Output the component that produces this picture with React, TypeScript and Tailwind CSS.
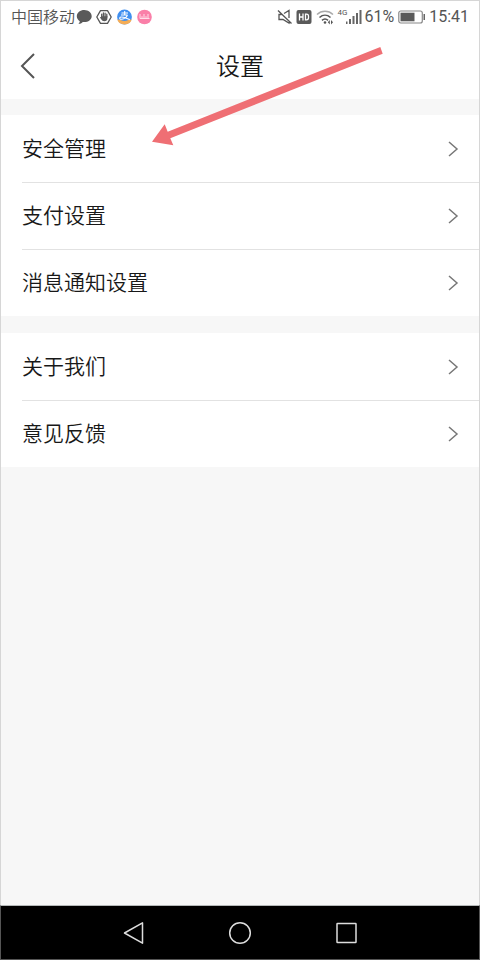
import React from "react";

const groups: string[][] = [
  ["安全管理", "支付设置", "消息通知设置"],
  ["关于我们", "意见反馈"],
];

function StatusBar() {
  return (
    <div className="flex h-8 items-center justify-between pl-[10px] pr-[10px] text-base text-[#555]">
      <div className="flex items-center">
        <span className="w-[65px] whitespace-nowrap pt-px font-[350]">中国移动</span>
        <svg className="mr-1 h-4 w-4" viewBox="0 0 16 16" fill="#5a5a5a" aria-hidden="true">
          <path d="M8.300 1C4.200 1 .8 3.600.8 7.200c0 2.100 1.200 3.900 3 5-.1 1.200-.7 2-1.500 2.800 2 0 3.500-.9 4.500-2 .4.100.9.100 1.300.100 4.300 0 7.600-2.600 7.600-5.900S12.400 1 8.300 1z" />
        </svg>
        <svg className="mr-1 h-4 w-4" viewBox="0 0 16 16" aria-hidden="true">
          <path d="M4.500 1.700h7L15.200 8l-3.700 6.300h-7L.8 8z" fill="none" stroke="#555" strokeWidth="1.300" strokeLinejoin="round" />
          <path d="M5.700 8V5.200M7.400 8V4M9.100 8V4.200M10.800 8V5.200" stroke="#5a5a5a" strokeWidth="1.300" strokeLinecap="round" />
          <path d="M3.800 8.300l1.300-.3.600-.8h5.700v2.300c0 1.700-1.200 2.800-3 2.800-1.600 0-2.500-.8-3.200-2z" fill="#5a5a5a" />
        </svg>
        <svg className="mr-1 h-4 w-4" viewBox="0 0 16 16" aria-hidden="true">
          <circle cx="8.500" cy="8" r="7.400" fill="#3f8ff0" />
          <path d="M1.200 10.500c2.500-.4 4.800 1.500 7.300 1.500s4.800-1.900 7.300-1.500a7.600 7.600 0 0 1-7.300 4.900 7.600 7.600 0 0 1-7.300-4.900z" fill="#f6ad55" />
          <path d="M5.500 4h6.500M8.700 2v4M11.500 6C10.500 9 7 10.600 4.500 10.200c-1.300-.3-1-2.200.8-2.200 3 0 5 1.600 8.500 2.600M5 6h6.500" stroke="#fff" strokeWidth="1.100" fill="none" />
        </svg>
        <svg className="h-4 w-4" viewBox="0 0 16 16" aria-hidden="true">
          <circle cx="8.500" cy="8" r="7.300" fill="#fa7fa8" />
          <path d="M4 5v4.500h2V7.200M8 5v4.500h2V7.200M12 5v4.500h1.500M6 9.500h2M10 9.500h2" stroke="#ffdce8" strokeWidth="1" fill="none" />
        </svg>
      </div>
      <div className="flex items-center">
        <svg className="mr-[3px] h-4 w-4" viewBox="0 0 16 16" fill="none" stroke="#555" strokeWidth="1.300" aria-hidden="true">
          <path d="M1 1.500l13.500 13M7 4.500L12 1.500V9M12 11.500v2.500L6 10.500H2v-5h2.500" />
        </svg>
        <svg className="mr-1 h-4 w-4" viewBox="0 0 16 16" aria-hidden="true">
          <rect x=".5" y="1" width="15" height="14" rx="2" fill="#5a5a5a" />
          <path d="M3.500 4.500v7M7 4.500v7M3.500 8H7M9.500 5.200v5.600h1c1.300 0 2-.8 2-2.100V7.300c0-1.300-.7-2.100-2-2.100z" fill="none" stroke="#fff" strokeWidth="1.300" />
        </svg>
        <svg className="mr-[3px] h-4 w-[18px]" viewBox="0 0 18 16" fill="none" aria-hidden="true">
          <path d="M1 5.500C5.500 1.300 12.500 1.300 17 5.500" stroke="#aaa" strokeWidth="1.500" />
          <path d="M3.500 8.500c3.300-3 7.700-3 11 0M6 11.300c1.800-1.600 4.200-1.600 6 0" stroke="#555" strokeWidth="1.600" />
          <circle cx="9" cy="13.500" r="1.300" fill="#555" />
          <path d="M13.800 11l-2 2.300 2 2.300zM15 11l2 2.300-2 2.300z" fill="#555" />
        </svg>
        <span className="w-[9px] self-start pt-[2px] text-[8px] leading-[12px]">4G</span>
        <svg className="mr-[2px] h-4 w-4" viewBox="0 0 16 16" fill="#666" aria-hidden="true">
          <path d="M0 12.500h1.500V15H0zM3 10h2v5H3zM6.500 7h2v8h-2zM10 4h2v11h-2zM13.500 1h2v14h-2z" />
        </svg>
        <span className="mr-1">61%</span>
        <svg className="mr-[3px] h-4 w-7" viewBox="0 0 28 16" aria-hidden="true">
          <rect x=".8" y="2" width="23.500" height="12" rx="2" fill="none" stroke="#888" strokeWidth="1.200" />
          <path d="M2.500 3.700h14v8.600h-14z" fill="#5a5a5a" />
          <path d="M25.500 5h1.500v6h-1.500z" fill="#666" />
        </svg>
        <span>15:41</span>
      </div>
    </div>
  );
}

function Chevron() {
  return (
    <svg className="h-4 w-3" viewBox="0 0 12 16" fill="none" stroke="#777" strokeWidth="1.500" aria-hidden="true">
      <path d="M2 1l8 7-8 7" />
    </svg>
  );
}

export default function App() {
  return (
    <div className="relative flex min-h-screen flex-col bg-[#f7f7f7] font-[Roboto,'Noto_Sans_CJK_SC',sans-serif] text-[#181818]">
      <header className="border border-b-0 border-[#d6d6d6] bg-white">
        <StatusBar />
        <div className="grid h-[66px] grid-cols-[1fr_auto_1fr] items-center px-[19px]">
          <button type="button" aria-label="返回" className="w-4">
            <svg className="h-[26px] w-4" viewBox="0 0 16 26" fill="none" stroke="#555" strokeWidth="2" aria-hidden="true">
              <path d="M14 1L2 13l12 12" />
            </svg>
          </button>
          <h1 className="pt-[2px] text-2xl font-[350]">设置</h1>
        </div>
      </header>

      <main className="flex grow flex-col gap-[17px] border-x border-[#d6d6d6] pt-4">
        {groups.map((items) => (
          <ul key={items[0]} className="bg-white pl-[21px]">
            {items.map((label) => (
              <li key={label} className="flex h-[67px] border-t border-[#e2e2e2] first:border-t-0">
                <button type="button" className="flex w-full items-center justify-between pr-5 text-left text-[21px] font-[350]">
                  <span className="pt-[2px]">{label}</span>
                  <Chevron />
                </button>
              </li>
            ))}
          </ul>
        ))}
      </main>

      <nav className="flex h-[55px] items-center justify-center gap-20 border border-[#555] border-t-[#b5b9b9] bg-black" aria-label="系统导航">
        <button type="button" aria-label="后退">
          <svg className="h-[26px] w-[26px]" viewBox="0 0 26 26" fill="none" stroke="#ddd" strokeWidth="1.500" strokeLinejoin="round" aria-hidden="true">
            <path d="M3.500 13L21.500 2.800v20.400z" />
          </svg>
        </button>
        <button type="button" aria-label="主屏幕">
          <svg className="h-[26px] w-[26px]" viewBox="0 0 26 26" fill="none" stroke="#ddd" strokeWidth="1.500" aria-hidden="true">
            <circle cx="13" cy="13" r="10.300" />
          </svg>
        </button>
        <button type="button" aria-label="最近任务">
          <svg className="h-[26px] w-[26px]" viewBox="0 0 26 26" fill="none" stroke="#ddd" strokeWidth="1.500" aria-hidden="true">
            <rect x="4" y="3.500" width="19" height="19" rx=".5" />
          </svg>
        </button>
      </nav>

      <svg className="pointer-events-none absolute top-[46px] left-[151px] h-[100px] w-[233px]" viewBox="151 46 233 100" fill="#ef6f74" aria-hidden="true">
        <path d="M152 141.700L164.700 124.300l3 7.400L380.300 47l2.400 6.700L170.300 138.300l3 7z" />
      </svg>
    </div>
  );
}
